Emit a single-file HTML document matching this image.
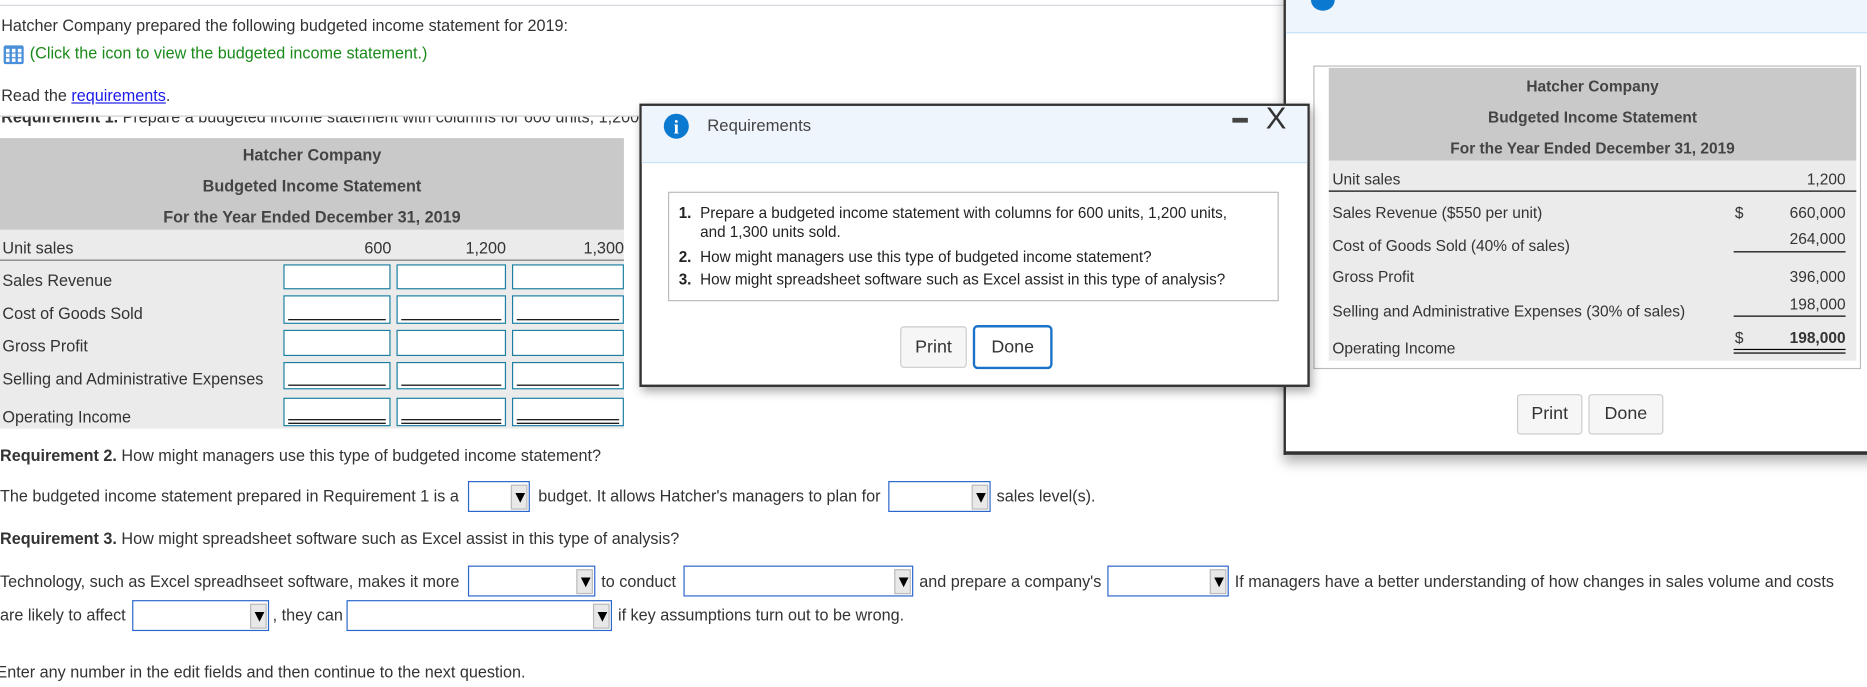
<!DOCTYPE html>
<html><head><meta charset="utf-8">
<style>
html,body{margin:0;padding:0;background:#fff;overflow:hidden;width:1867px;height:687px}
#w{position:absolute;left:0;top:0;width:1568px;height:577px;transform:scale(1.19069);transform-origin:0 0;font-family:"Liberation Sans",Arial,sans-serif;font-size:13.6px;color:#333}
.a{position:absolute;white-space:nowrap}
.inp{position:absolute;background:#fff;border:1px solid #1a7fa0;box-sizing:border-box}
.ul{position:absolute;left:3px;right:3px;border-top:1px solid #000}
.sel{position:absolute;background:#fff;border:1px solid #2a66cc;box-sizing:border-box;height:26px}
.sel i{position:absolute;right:1px;top:2px;width:14px;height:21px;background:#e8e8e8;border:1px solid #bbb;box-sizing:border-box;font-style:normal;font-size:14px;color:#000;text-align:center;line-height:19px}
.btn{position:absolute;background:#f6f6f6;border:1px solid #ccc;border-radius:3px;box-sizing:border-box;text-align:center;font-size:15px;color:#333}
.hd{position:absolute;left:0;width:100%;text-align:center;font-weight:bold;color:#444;font-size:13.6px}
</style></head><body><div id="w">
<div class="a" style="left:0;top:4px;width:1078px;border-top:1px solid #d6d9e0"></div>
<div class="a" style="left:1px;top:14px">Hatcher Company prepared the following budgeted income statement for 2019:</div>
<svg class="a" style="left:3px;top:38px" width="17" height="16" viewBox="0 0 17 16"><rect x="0" y="0" width="17" height="16" rx="2" fill="#4a8fd8"/><g fill="#fff"><rect x="2" y="3" width="3" height="3"/><rect x="7" y="3" width="3" height="3"/><rect x="12" y="3" width="3" height="3"/><rect x="2" y="7" width="3" height="3"/><rect x="7" y="7" width="3" height="3"/><rect x="12" y="7" width="3" height="3"/><rect x="2" y="11" width="3" height="3"/><rect x="7" y="11" width="3" height="3"/><rect x="12" y="11" width="3" height="3"/></g></svg>
<div class="a" style="left:25px;top:37px;color:#1a8a1a">(Click the icon to view the budgeted income statement.)</div>
<div class="a" style="left:1px;top:73px">Read the <span style="color:#1a1aee;text-decoration:underline">requirements</span>.</div>
<div class="a" style="left:0;top:97px;width:537px;height:10px;overflow:hidden;border-top:1px solid #ccc"><div class="a" style="left:1px;top:-7px"><b>Requirement 1.</b> Prepare a budgeted income statement with columns for 600 units, 1,200 units, and 1,300 units sold.</div></div>

<div class="a" style="left:0;top:116px;width:524px;height:77px;background:#c9c9c9">
<div class="hd" style="top:7px">Hatcher Company</div>
<div class="hd" style="top:33px">Budgeted Income Statement</div>
<div class="hd" style="top:59px">For the Year Ended December 31, 2019</div>
</div>
<div class="a" style="left:0;top:193px;width:524px;height:167px;background:#ebebeb"></div>
<div class="a" style="left:2px;top:201px">Unit sales</div>
<div class="a" style="left:306px;top:201px">600</div>
<div class="a" style="left:391px;top:201px">1,200</div>
<div class="a" style="left:490px;top:201px">1,300</div>
<div class="a" style="left:0;top:218px;width:524px;border-top:1px solid #777"></div>
<div class="a" style="left:2px;top:228px">Sales Revenue</div>
<div class="a" style="left:2px;top:256px">Cost of Goods Sold</div>
<div class="a" style="left:2px;top:283px">Gross Profit</div>
<div class="a" style="left:2px;top:311px">Selling and Administrative Expenses</div>
<div class="a" style="left:2px;top:343px">Operating Income</div>

<div class="inp" style="left:238px;top:222px;width:90px;height:21px"></div>
<div class="inp" style="left:333px;top:222px;width:92px;height:21px"></div>
<div class="inp" style="left:430px;top:222px;width:94px;height:21px"></div>
<div class="inp" style="left:238px;top:248px;width:90px;height:24px"><div class="ul" style="top:19px"></div></div>
<div class="inp" style="left:333px;top:248px;width:92px;height:24px"><div class="ul" style="top:19px"></div></div>
<div class="inp" style="left:430px;top:248px;width:94px;height:24px"><div class="ul" style="top:19px"></div></div>
<div class="inp" style="left:238px;top:277px;width:90px;height:22px"></div>
<div class="inp" style="left:333px;top:277px;width:92px;height:22px"></div>
<div class="inp" style="left:430px;top:277px;width:94px;height:22px"></div>
<div class="inp" style="left:238px;top:304px;width:90px;height:23px"><div class="ul" style="top:18px"></div></div>
<div class="inp" style="left:333px;top:304px;width:92px;height:23px"><div class="ul" style="top:18px"></div></div>
<div class="inp" style="left:430px;top:304px;width:94px;height:23px"><div class="ul" style="top:18px"></div></div>
<div class="inp" style="left:238px;top:334px;width:90px;height:24px"><div class="ul" style="top:17px;border-top:4px double #000;height:0"></div></div>
<div class="inp" style="left:333px;top:334px;width:92px;height:24px"><div class="ul" style="top:17px;border-top:4px double #000;height:0"></div></div>
<div class="inp" style="left:430px;top:334px;width:94px;height:24px"><div class="ul" style="top:17px;border-top:4px double #000;height:0"></div></div>

<!-- Data table modal -->
<div class="a" style="left:1078px;top:-30px;width:500px;height:412px;border-left:2px solid #333;border-bottom:3px solid #333;box-sizing:border-box;background:#fff;box-shadow:0 6px 10px rgba(0,0,0,.3)">
<div class="a" style="left:0;top:0;width:100%;height:57px;background:#eff5fd;border-bottom:1px solid #c8e0f6"></div>
<div class="a" style="left:21px;top:21px;width:20px;height:18px;border-radius:50%;background:#0b79d0"></div>
<div class="a" style="left:23px;top:85px;width:460px;height:255px;border:1px solid #bbb;box-sizing:border-box"></div>
</div>
<div class="a" style="left:1116px;top:57px;width:443px;height:78px;background:#c9c9c9">
<div class="hd" style="top:8px;font-size:13px">Hatcher Company</div>
<div class="hd" style="top:34px;font-size:13px">Budgeted Income Statement</div>
<div class="hd" style="top:60px;font-size:13px">For the Year Ended December 31, 2019</div>
</div>
<div class="a" style="left:1116px;top:135px;width:443px;height:168px;background:#ebebeb;font-size:13px">
<div class="a" style="left:3px;top:8px">Unit sales</div><div class="a" style="right:9px;top:8px">1,200</div>
<div class="a" style="left:0;top:25px;width:443px;border-top:1px solid #000"></div>
<div class="a" style="left:3px;top:36px">Sales Revenue ($550 per unit)</div><div class="a" style="left:341px;top:36px">$</div><div class="a" style="right:9px;top:36px">660,000</div>
<div class="a" style="left:3px;top:64px">Cost of Goods Sold (40% of sales)</div><div class="a" style="right:9px;top:58px">264,000</div>
<div class="a" style="left:340px;top:76px;width:94px;border-top:1px solid #000"></div>
<div class="a" style="left:3px;top:90px">Gross Profit</div><div class="a" style="right:9px;top:90px">396,000</div>
<div class="a" style="left:3px;top:119px">Selling and Administrative Expenses (30% of sales)</div><div class="a" style="right:9px;top:113px">198,000</div>
<div class="a" style="left:340px;top:130px;width:94px;border-top:1px solid #000"></div>
<div class="a" style="left:341px;top:141px">$</div><div class="a" style="right:9px;top:141px;font-weight:bold">198,000</div>
<div class="a" style="left:3px;top:150px">Operating Income</div>
<div class="a" style="left:340px;top:158px;width:94px;border-top:4px double #000"></div>
</div>
<div class="btn" style="left:1274px;top:331px;width:55px;height:34px;line-height:32px">Print</div>
<div class="btn" style="left:1334px;top:331px;width:63px;height:34px;line-height:32px">Done</div>

<!-- Requirements modal (on top) -->
<div class="a" style="left:537px;top:87px;width:563px;height:238px;border:2px solid #333;box-sizing:border-box;background:#fff;box-shadow:2px 4px 8px rgba(0,0,0,.35)">
<div class="a" style="left:0;top:0;width:100%;height:47px;background:#eff5fd;border-bottom:1px solid #c8e0f6"></div>
<svg class="a" style="left:18px;top:6px" width="22" height="22" viewBox="0 0 22 22"><circle cx="11" cy="11" r="10.5" fill="#0b79d0"/><text x="11" y="17" text-anchor="middle" font-family="Liberation Serif,serif" font-weight="bold" font-size="16" fill="#fff">i</text></svg>
<div class="a" style="left:55px;top:8px;font-size:14px;color:#444">Requirements</div>
<div class="a" style="left:496px;top:10px;width:13px;height:4px;background:#444"></div>
<div class="a" style="left:524px;top:-5px;font-size:26px;color:#333">X</div>
<div class="a" style="left:22px;top:72px;width:513px;height:92px;border:1px solid #bbb;box-sizing:border-box;font-size:12.8px;line-height:16px;color:#222">
<div class="a" style="left:8px;top:9px"><b>1.</b></div><div class="a" style="left:26px;top:9px">Prepare a budgeted income statement with columns for 600 units, 1,200 units,<br>and 1,300 units sold.</div>
<div class="a" style="left:8px;top:46px"><b>2.</b></div><div class="a" style="left:26px;top:46px">How might managers use this type of budgeted income statement?</div>
<div class="a" style="left:8px;top:65px"><b>3.</b></div><div class="a" style="left:26px;top:65px">How might spreadsheet software such as Excel assist in this type of analysis?</div>
</div>
<div class="btn" style="left:217px;top:185px;width:56px;height:35px;line-height:33px">Print</div>
<div class="btn" style="left:278px;top:184px;width:67px;height:37px;line-height:33px;border:2px solid #1b73c9;border-radius:4px;background:#fff">Done</div>
</div>

<!-- bottom -->
<div class="a" style="left:0;top:375px"><b>Requirement 2.</b> How might managers use this type of budgeted income statement?</div>
<div class="a" style="left:0;top:409px">The budgeted income statement prepared in Requirement 1 is a</div>
<div class="sel" style="left:393px;top:404px;width:52px"><i>▼</i></div>
<div class="a" style="left:452px;top:409px">budget. It allows Hatcher's managers to plan for</div>
<div class="sel" style="left:746px;top:404px;width:86px"><i>▼</i></div>
<div class="a" style="left:837px;top:409px">sales level(s).</div>
<div class="a" style="left:0;top:445px"><b>Requirement 3.</b> How might spreadsheet software such as Excel assist in this type of analysis?</div>
<div class="a" style="left:0;top:481px">Technology, such as Excel spreadhseet software, makes it more</div>
<div class="sel" style="left:393px;top:475px;width:107px"><i>▼</i></div>
<div class="a" style="left:505px;top:481px">to conduct</div>
<div class="sel" style="left:574px;top:475px;width:193px"><i>▼</i></div>
<div class="a" style="left:772px;top:481px">and prepare a company's</div>
<div class="sel" style="left:930px;top:475px;width:102px"><i>▼</i></div>
<div class="a" style="left:1037px;top:481px">If managers have a better understanding of how changes in sales volume and costs</div>
<div class="a" style="left:0;top:509px">are likely to affect</div>
<div class="sel" style="left:111px;top:504px;width:115px"><i>▼</i></div>
<div class="a" style="left:229px;top:509px">, they can</div>
<div class="sel" style="left:291px;top:504px;width:223px"><i>▼</i></div>
<div class="a" style="left:519px;top:509px">if key assumptions turn out to be wrong.</div>
<div class="a" style="left:-3px;top:557px">Enter any number in the edit fields and then continue to the next question.</div>
</div></body></html>
